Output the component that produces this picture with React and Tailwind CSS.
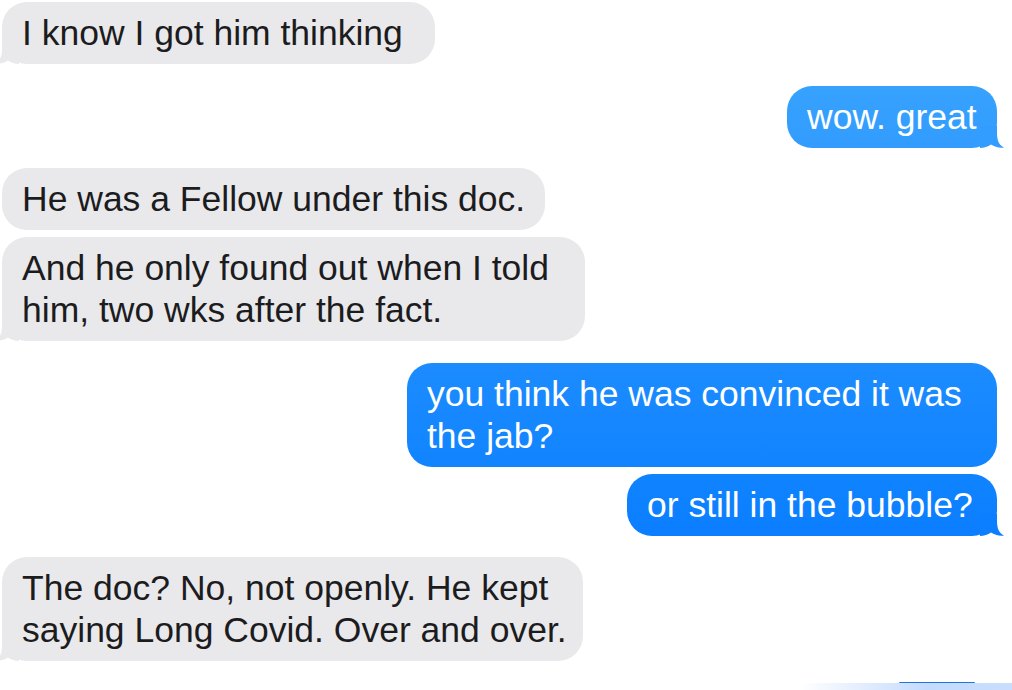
import React from 'react';

const messages = [
  { id: 1, from: 'them', lines: ['I know I got him thinking'], tail: true, mt: 'mt-0', w: 'w-[433px]' },
  { id: 2, from: 'me', lines: ['wow. great'], tail: true, mt: 'mt-[22px]', w: 'w-[210px]', tailColor: '#329dfe' },
  { id: 3, from: 'them', lines: ['He was a Fellow under this doc.'], tail: false, mt: 'mt-[20px]', w: 'w-[543px]' },
  { id: 4, from: 'them', lines: ['And he only found out when I told', 'him, two wks after the fact.'], tail: true, mt: 'mt-[7px]', w: 'w-[583px]' },
  { id: 5, from: 'me', lines: ['you think he was convinced it was', 'the jab?'], tail: false, mt: 'mt-[22px]', w: 'w-[590px]' },
  { id: 6, from: 'me', lines: ['or still in the bubble?'], tail: true, mt: 'mt-[7px]', w: 'w-[370px]', tailColor: '#0b7fff' },
  { id: 7, from: 'them', lines: ['The doc? No, not openly. He kept', 'saying Long Covid. Over and over.'], tail: true, mt: 'mt-[21px]', w: 'w-[581px]' },
];

// little curled tail at the bottom corner of a bubble
function Tail({ side, color }) {
  const pos = side === 'right' ? 'right-[-7px]' : 'left-[-7px] -scale-x-100';
  return (
    <svg
      className={`absolute bottom-0 ${pos}`}
      width="24"
      height="22"
      viewBox="0 0 24 22"
    >
      <path
        d="M0 0 H17 V7 C17 14.5 19 19 24 21.6 C19.5 22.3 14.5 21 11 18.6 C8 20.8 4 22 0 22 Z"
        fill={color}
      />
    </svg>
  );
}

function Bubble({ msg }) {
  const mine = msg.from === 'me';
  return (
    <div className={`flex ${mine ? 'justify-end pr-[15px]' : 'justify-start pl-[2px]'} ${msg.mt}`}>
      <div
        className={`relative ${msg.w} rounded-[25px] pl-[20px] py-[10px] text-[35.5px] leading-[42px] ${
          mine
            ? 'bg-[linear-gradient(180deg,#40a8fe_0%,#0a7eff_78%,#0678ff_100%)] bg-fixed text-white'
            : 'bg-[#e9e9eb] text-[#1c1c1e]'
        }`}
      >
        {msg.tail && <Tail side={mine ? 'right' : 'left'} color={mine ? msg.tailColor : '#e9e9eb'} />}
        <div className="relative whitespace-nowrap">
          {msg.lines.map((line, i) => (
            <React.Fragment key={i}>
              {i > 0 && <br />}
              {line}
            </React.Fragment>
          ))}
        </div>
      </div>
    </div>
  );
}

export default function App() {
  return (
    <div
      className="w-[1012px] h-[690px] overflow-hidden bg-white pt-[2px] flex flex-col"
      style={{ fontFamily: '"Liberation Sans", Arial, sans-serif' }}
    >
      {messages.map((m) => (
        <Bubble key={m.id} msg={m} />
      ))}

      {/* top edge of the next message peeking in */}
      <div className="mt-[21px] flex flex-col items-end">
        <div className="mr-[37px] w-[76px] h-[1px] rounded-t-full bg-[#1a78e6]" />
        <div className="w-[212px] h-[8px] bg-[linear-gradient(90deg,rgba(197,220,255,0)_0%,#c4dbfe_60%,#c9defe_100%)]" />
      </div>
    </div>
  );
}
